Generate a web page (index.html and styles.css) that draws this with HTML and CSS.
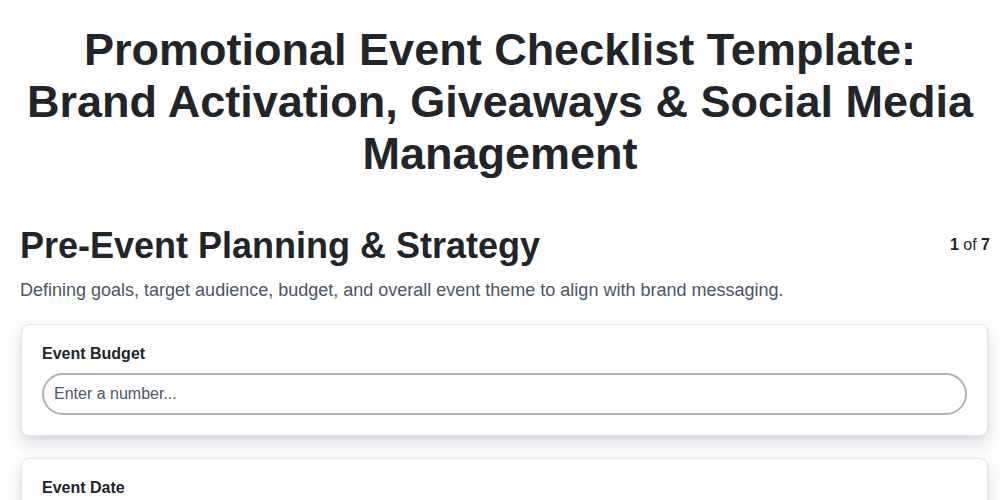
FILE: index.html
```html
<!DOCTYPE html>
<html lang="en">
<head>
<meta charset="utf-8">
<title>Promotional Event Checklist Template</title>
<link rel="stylesheet" href="styles.css">
</head>
<body>
<main class="page">
  <h1 class="page-title">Promotional Event Checklist Template: Brand Activation, Giveaways &amp; Social Media Management</h1>
  <section class="step">
    <header class="step-head">
      <h2 class="step-title">Pre-Event Planning &amp; Strategy</h2>
      <div class="step-count"><b>1</b> of <b>7</b></div>
    </header>
    <p class="step-desc">Defining goals, target audience, budget, and overall event theme to align with brand messaging.</p>
    <div class="card">
      <label class="field-label" for="budget">Event Budget</label>
      <input class="field-input" id="budget" type="text" placeholder="Enter a number...">
    </div>
    <div class="card">
      <label class="field-label" for="date">Event Date</label>
      <input class="field-input" id="date" type="text" placeholder="Select a date...">
    </div>
  </section>
</main>
</body>
</html>
```
FILE: styles.css
```css
* { box-sizing: border-box; }
html, body { margin: 0; padding: 0; background: #fff; }
body {
  font-family: "Liberation Sans", Arial, sans-serif;
  color: #212529;
}
.page {
  padding: 0 12px 20px;
}
.page-title {
  margin: 24px 0 0;
  padding: 0 8px;
  text-align: center;
  font-size: 45px;
  line-height: 52px;
  font-weight: 700;
  color: #212529;
}
.step {
  margin-top: 44px;
  padding-left: 8px;
}
.step-head {
  display: flex;
  justify-content: space-between;
  align-items: flex-start;
}
.step-title {
  margin: 0;
  font-size: 36px;
  line-height: 44px;
  font-weight: 700;
  color: #212529;
}
.step-count {
  font-size: 16px;
  line-height: 18px;
  margin-top: 12px;
  margin-right: -2px;
  color: #212529;
}
.step-desc {
  margin: 10px 0 22px;
  font-size: 18px;
  line-height: 24px;
  color: #4a5568;
}
.card {
  background: #fff;
  border: 1px solid #e6e7ec;
  border-radius: 8px;
  padding: 20px;
  margin: 0 0 22px 1px;
  box-shadow: 0 8px 16px rgba(30, 40, 70, 0.16), 0 1px 3px rgba(30, 40, 70, 0.06);
}
.field-label {
  display: block;
  font-size: 16px;
  line-height: 18px;
  font-weight: 700;
  color: #212529;
  margin-bottom: 10px;
}
.field-input {
  display: block;
  width: 100%;
  height: 42px;
  padding: 0 10px;
  font-family: "Liberation Sans", Arial, sans-serif;
  font-size: 16px;
  color: #212529;
  border: 2px solid #a9b4be;
  border-radius: 999px;
  background: #fff;
  outline: none;
}
.field-input::placeholder { color: #4a5568; opacity: 1; }
```
